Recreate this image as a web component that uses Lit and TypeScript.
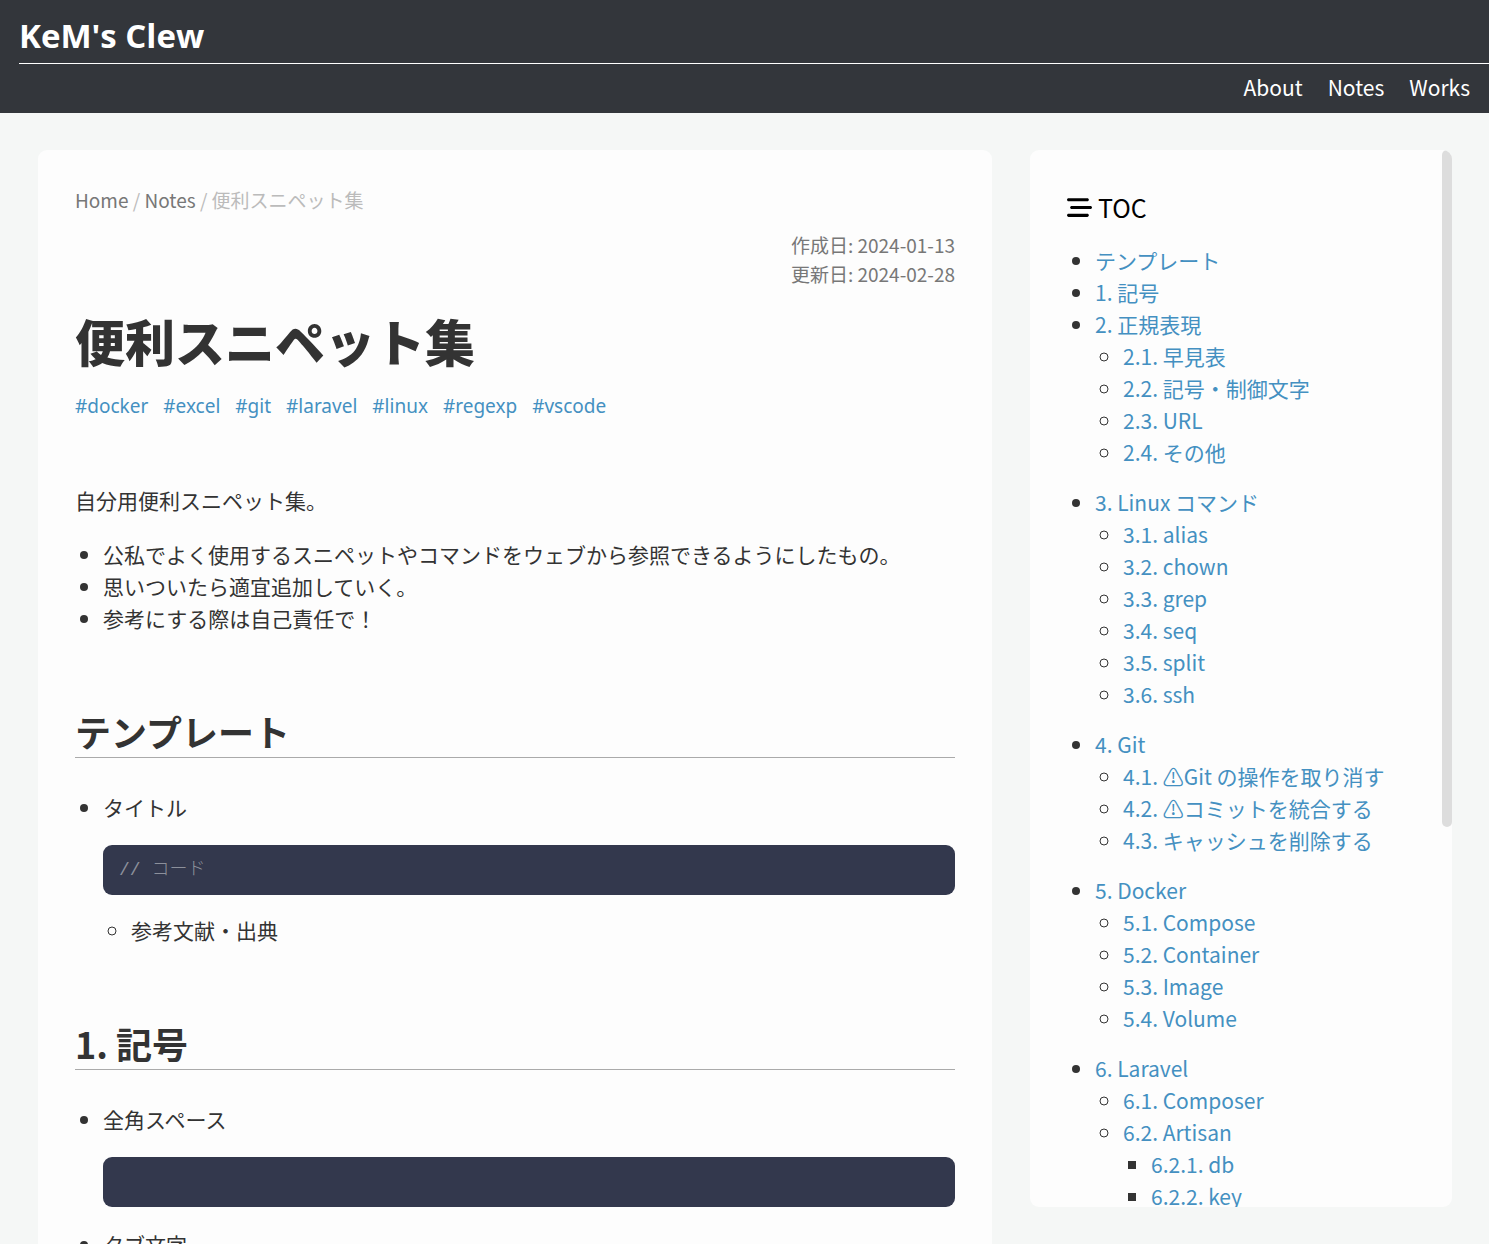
import { LitElement, html, css, svg, nothing, type TemplateResult } from "lit";
import { customElement } from "lit/decorators.js";

interface TocEntry {
  label: string;
  children?: TocEntry[];
}

const entries = (...labels: string[]): TocEntry[] => labels.map((label) => ({ label }));

const TOC: TocEntry[] = [
  { label: "テンプレート" },
  { label: "1. 記号" },
  {
    label: "2. 正規表現",
    children: entries("2.1. 早見表", "2.2. 記号・制御文字", "2.3. URL", "2.4. その他"),
  },
  {
    label: "3. Linux コマンド",
    children: entries("3.1. alias", "3.2. chown", "3.3. grep", "3.4. seq", "3.5. split", "3.6. ssh"),
  },
  {
    label: "4. Git",
    children: entries("4.1. ⚠Git の操作を取り消す", "4.2. ⚠コミットを統合する", "4.3. キャッシュを削除する"),
  },
  {
    label: "5. Docker",
    children: entries("5.1. Compose", "5.2. Container", "5.3. Image", "5.4. Volume"),
  },
  {
    label: "6. Laravel",
    children: [
      { label: "6.1. Composer" },
      { label: "6.2. Artisan", children: entries("6.2.1. db", "6.2.2. key") },
    ],
  },
];

const TAGS = ["docker", "excel", "git", "laravel", "linux", "regexp", "vscode"];

const barsIcon = svg`<path d="M0 96C0 78.3 14.3 64 32 64l384 0c17.7 0 32 14.3 32 32s-14.3 32-32 32L32 128C14.3 128 0 113.7 0 96zM64 256c0-17.7 14.3-32 32-32l384 0c17.7 0 32 14.3 32 32s-14.3 32-32 32L96 288c-17.7 0-32-14.3-32-32zM448 416c0 17.7-14.3 32-32 32L32 448c-17.7 0-32-14.3-32-32s14.3-32 32-32l384 0c17.7 0 32 14.3 32 32z"/>`;

@customElement("site-header")
export class SiteHeader extends LitElement {
  static styles = css`
    :host {
      display: block;
      background: #33363b;
      color: #fff;
      padding-left: 19px;
    }
    a {
      color: inherit;
      text-decoration: none;
    }
    .brand {
      display: block;
      padding: 12px 0 3px;
      border-bottom: 1px solid #fff;
      font: 700 33px/48px "Open Sans", "Noto Sans", sans-serif;
    }
    .nav {
      display: flex;
      justify-content: flex-end;
      gap: 25px;
      padding: 7px 19px 10px 0;
    }
  `;

  render() {
    return html`
      <header>
        <a class="brand" href="#home">KeM's Clew</a>
        <nav class="nav">
          <a href="#about">About</a>
          <a href="#notes">Notes</a>
          <a href="#works">Works</a>
        </nav>
      </header>
    `;
  }
}

@customElement("toc-panel")
export class TocPanel extends LitElement {
  static styles = css`
    :host {
      display: block;
      height: 85vh;
      position: sticky;
      top: 37px;
      overflow: hidden;
      background: #fdfdfd;
      border-radius: 9px;
    }
    .scroller {
      box-sizing: border-box;
      height: 100%;
      padding: 37px 37px 0;
      overflow-y: auto;
      scrollbar-width: none;
    }
    .thumb {
      position: absolute;
      top: 0;
      right: 0;
      width: 10px;
      height: 64%;
      border-radius: 5px;
      background: #ddd;
    }
    .title {
      display: flex;
      align-items: center;
      gap: 6px;
      margin: 0 0 17px;
      color: #000;
      font-size: 25px;
      font-weight: 400;
      line-height: 40px;
    }
    .icon {
      width: 25px;
      height: 25px;
    }
    ul {
      margin: 0;
      padding-left: 28px;
    }
    ul ul {
      margin-bottom: 18px;
    }
    a {
      color: #4490c1;
      text-decoration: none;
    }
  `;

  private renderList(list: TocEntry[]): TemplateResult {
    return html`<ul>
      ${list.map(
        (entry) => html`<li>
          <a href="#${entry.label}">${entry.label}</a>
          ${entry.children ? this.renderList(entry.children) : nothing}
        </li>`,
      )}
    </ul>`;
  }

  render() {
    return html`
      <div class="scroller">
        <h2 class="title">
          <svg class="icon" viewBox="0 0 512 512" fill="currentColor" aria-hidden="true">${barsIcon}</svg>
          TOC
        </h2>
        <nav aria-label="TOC">${this.renderList(TOC)}</nav>
      </div>
      <div class="thumb"></div>
    `;
  }
}

@customElement("note-article")
export class NoteArticle extends LitElement {
  static styles = css`
    :host {
      display: block;
      padding: 35px 37px 37px;
      background: #fdfdfd;
      border-radius: 9px;
    }
    a {
      color: #4490c1;
      text-decoration: none;
    }
    .crumbs {
      color: #bbb;
      font-size: 19px;
      line-height: 29px;
    }
    .crumbs a {
      color: #777;
    }
    .dates {
      margin-top: 16px;
      color: #777;
      font-size: 19px;
      line-height: 29px;
      text-align: right;
    }
    h1 {
      margin: 15px 0;
      font-size: 50px;
      font-weight: 900;
      line-height: 74px;
    }
    .tags {
      display: flex;
      flex-wrap: wrap;
      gap: 15px;
      font: 19px/29px "Noto Sans", sans-serif;
    }
    p {
      margin: 63px 0 22px;
    }
    h2 {
      margin: 74px 0 33px;
      padding-bottom: 2px;
      border-bottom: 1px solid #aaa;
      font-size: 36px;
      font-weight: 700;
      line-height: 47px;
    }
    ul {
      margin: 0;
      padding-left: 28px;
    }
    .samples > li + li {
      margin-top: 21px;
    }
    pre {
      box-sizing: border-box;
      min-height: 50px;
      margin: 22px 0 19px;
      padding: 9px 16px;
      border-radius: 9px;
      background: #33384d;
      color: #8c909b;
      font: 300 18px/32px "Liberation Mono", "Noto Sans CJK JP", monospace;
    }
    code {
      font: inherit;
    }
  `;

  render() {
    return html`
      <article>
        <nav class="crumbs" aria-label="Breadcrumb">
          <a href="#home">Home</a> / <a href="#notes">Notes</a> / <span>便利スニペット集</span>
        </nav>
        <div class="dates">
          <div>作成日: <time>2024-01-13</time></div>
          <div>更新日: <time>2024-02-28</time></div>
        </div>
        <h1>便利スニペット集</h1>
        <div class="tags">${TAGS.map((tag) => html`<a href="#${tag}">#${tag}</a>`)}</div>
        <p>自分用便利スニペット集。</p>
        <ul>
          <li>公私でよく使用するスニペットやコマンドをウェブから参照できるようにしたもの。</li>
          <li>思いついたら適宜追加していく。</li>
          <li>参考にする際は自己責任で！</li>
        </ul>
        <h2>テンプレート</h2>
        <ul class="samples">
          <li>
            タイトル
            <pre><code>// コード</code></pre>
            <ul>
              <li>参考文献・出典</li>
            </ul>
          </li>
        </ul>
        <h2>1. 記号</h2>
        <ul class="samples">
          <li>
            全角スペース
            <pre><code>　</code></pre>
          </li>
          <li>タブ文字</li>
        </ul>
      </article>
    `;
  }
}

@customElement("app-root")
export class AppRoot extends LitElement {
  static styles = css`
    :host {
      display: block;
      min-height: 100vh;
      background: #f5f7f6;
      color: #333;
      font-family: "Noto Sans CJK JP", sans-serif;
      font-size: 21px;
      line-height: 32px;
    }
    .layout {
      display: grid;
      grid-template-columns: minmax(0, 1fr) 422px;
      align-items: start;
      gap: 38px;
      padding: 37px 37px 37px 38px;
    }
  `;

  render() {
    return html`
      <site-header></site-header>
      <main class="layout">
        <note-article></note-article>
        <toc-panel></toc-panel>
      </main>
    `;
  }
}
